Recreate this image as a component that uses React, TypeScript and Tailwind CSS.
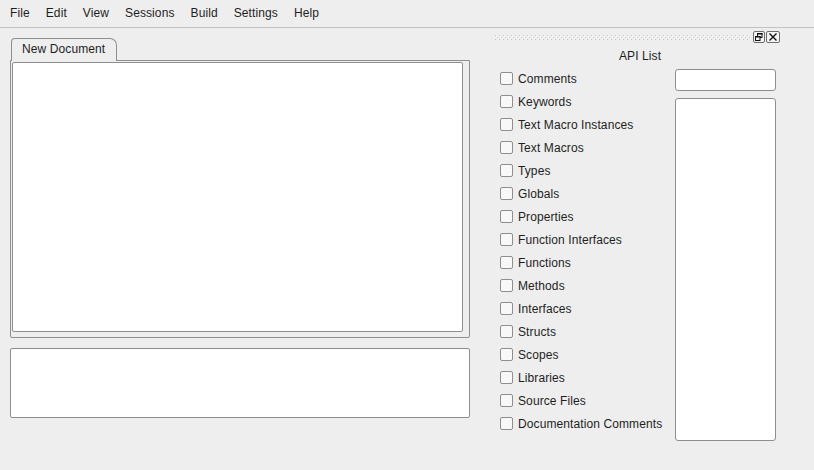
import React from "react";

const items = [
  "Comments",
  "Keywords",
  "Text Macro Instances",
  "Text Macros",
  "Types",
  "Globals",
  "Properties",
  "Function Interfaces",
  "Functions",
  "Methods",
  "Interfaces",
  "Structs",
  "Scopes",
  "Libraries",
  "Source Files",
  "Documentation Comments",
];

const menus = ["File", "Edit", "View", "Sessions", "Build", "Settings", "Help"];

function Grip() {
  return (
    <svg className="flex-1 h-[5px]" preserveAspectRatio="none">
      <defs>
        <pattern id="grip" width="4" height="4" patternUnits="userSpaceOnUse">
          <rect x="0" y="0" width="1" height="1" fill="#c4c4c4" />
          <rect x="1" y="1" width="1" height="1" fill="#ffffff" />
          <rect x="2" y="2" width="1" height="1" fill="#c4c4c4" />
          <rect x="3" y="3" width="1" height="1" fill="#ffffff" />
        </pattern>
      </defs>
      <rect x="0" y="0" width="100%" height="5" fill="url(#grip)" />
    </svg>
  );
}

function RestoreIcon() {
  return (
    <svg width="12" height="12" viewBox="0 0 12 12" className="block">
      <rect x="0.5" y="0.5" width="11" height="11" rx="1.5" fill="#f4f4f4" stroke="#6e6e6e" />
      <rect x="4.5" y="2.5" width="4.5" height="4" fill="none" stroke="#111" />
      <rect x="4.5" y="2" width="5" height="1.5" fill="#111" />
      <rect x="2.5" y="5.5" width="4.5" height="4" fill="#f4f4f4" stroke="#111" />
      <rect x="2.5" y="5" width="5" height="1.5" fill="#111" />
    </svg>
  );
}

function CloseIcon() {
  return (
    <svg width="14" height="12" viewBox="0 0 14 12" className="block">
      <rect x="0.5" y="0.5" width="13" height="11" rx="1.5" fill="#f4f4f4" stroke="#6e6e6e" />
      <path d="M3.5 2.5 L10.5 9.5 M10.5 2.5 L3.5 9.5" stroke="#111" strokeWidth="1.4" />
    </svg>
  );
}

export default function App() {
  return (
    <div
      className="w-[814px] h-[470px] bg-[#eeeeee] text-[12px] text-[#1e1e1e] overflow-hidden tracking-[0.1px]"
      style={{ fontFamily: '"Liberation Sans", Arial, sans-serif' }}
    >
      <div className="h-[28px] border-b border-[#c2c2c2] flex items-center pl-[2px] pb-[2px]">
        {menus.map((m) => (
          <div key={m} className="px-[8px] leading-[14px]">
            {m}
          </div>
        ))}
      </div>
      <div className="flex">
        <div className="ml-[10px] w-[460px] flex flex-col pt-[10px]">
          <div className="relative z-10 -mb-px ml-[1px] w-[106px] h-[23px] border border-b-0 border-[#8e8e8e] rounded-tl-[4px] rounded-tr-[7px] bg-[#eeeeee] pl-[10px] pt-[3px] leading-[14px]">
            New Document
          </div>
          <div className="h-[278px] border border-[#8e8e8e] rounded-b-[2px] pl-[1px] pt-[1px] pr-[6px] pb-[5px] flex">
            <div className="flex-1 bg-white border border-[#8e8e8e] rounded-[2px]" />
          </div>
          <div className="mt-[10px] h-[70px] bg-white border border-[#8e8e8e] rounded-[2px]" />
        </div>
        <div className="ml-[25px] w-[290px] flex flex-col pt-[2px]">
          <div className="h-[14px] flex items-center">
            <Grip />
            <div className="ml-[2px] flex items-center gap-[1px] mr-[5px]">
              <RestoreIcon />
              <CloseIcon />
            </div>
          </div>
          <div className="h-[23px] flex items-center justify-center leading-[14px]">
            API List
          </div>
          <div className="flex">
            <div className="w-[180px] flex flex-col pl-[5px]">
              {items.map((it) => (
                <div key={it} className="h-[23px] flex items-center">
                  <div className="w-[13px] h-[13px] border border-[#8e8e8e] rounded-[2px] bg-[#f8f8f8]" />
                  <span className="ml-[5px] leading-[14px] whitespace-nowrap">{it}</span>
                </div>
              ))}
            </div>
            <div className="w-[101px] flex flex-col pt-[2px]">
              <div className="h-[22px] bg-white border border-[#8e8e8e] rounded-[3px]" />
              <div className="mt-[7px] h-[343px] bg-white border border-[#8e8e8e] rounded-[3px]" />
            </div>
          </div>
        </div>
      </div>
    </div>
  );
}
